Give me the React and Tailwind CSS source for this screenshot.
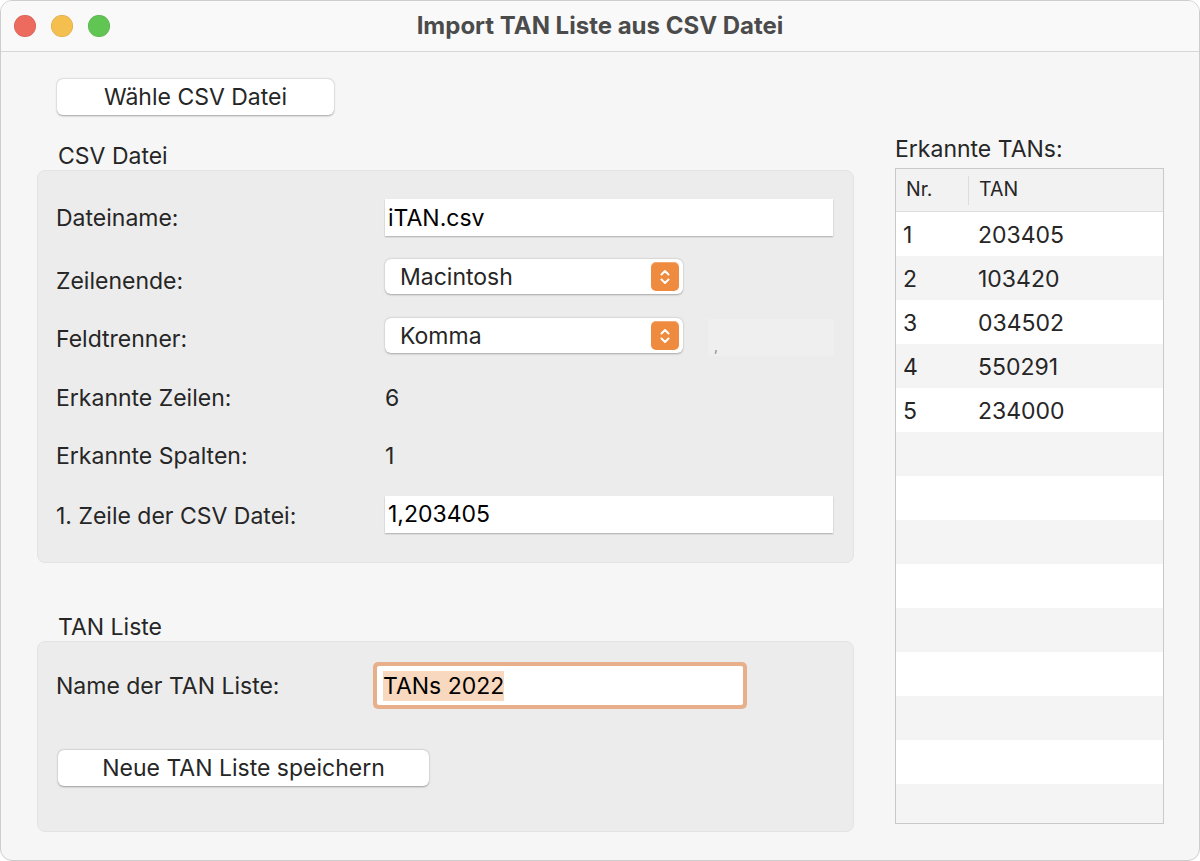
import React from "react";

const font = { fontFamily: "Inter, 'Noto Sans', sans-serif" };

function Stepper() {
  return (
    <div className="flex h-[29px] w-[28px] items-center justify-center rounded-[5px] bg-[#ee8b3f] shadow-[inset_0_1px_0_rgba(255,255,255,0.25)]">
      <svg width="14" height="20" viewBox="0 0 14 20" fill="none" stroke="white" strokeWidth="2" strokeLinecap="round" strokeLinejoin="round">
        <path d="M3.5 7.5 L7 4 L10.5 7.5" />
        <path d="M3.5 12.5 L7 16 L10.5 12.5" />
      </svg>
    </div>
  );
}

function Popup({ label }) {
  return (
    <div className="flex h-[35px] w-[298px] items-center justify-between rounded-[6px] bg-white pl-[15px] pr-[4px] shadow-[0_0.5px_2px_rgba(0,0,0,0.3)]">
      <span className="text-[23px] leading-[28px] text-[#262626]">{label}</span>
      <Stepper />
    </div>
  );
}

function TextField({ value, w = "w-[448px]" }) {
  return (
    <div className={`flex h-[37px] ${w} items-center bg-white pl-[3px] shadow-[0_1px_1.5px_rgba(0,0,0,0.28)]`}>
      <span className="text-[23px] leading-[28px] text-black">{value}</span>
    </div>
  );
}

function Button({ children, w }) {
  return (
    <div className={`flex h-[36px] ${w} items-center justify-center rounded-[6px] bg-white text-[23px] leading-[28px] text-[#262626] shadow-[0_0.5px_2px_rgba(0,0,0,0.35)]`}>
      {children}
    </div>
  );
}

const tans = [
  ["1", "203405"],
  ["2", "103420"],
  ["3", "034502"],
  ["4", "550291"],
  ["5", "234000"],
];

export default function App() {
  const rows = Array.from({ length: 15 }, (_, i) => i);
  return (
    <div className="h-[861px] w-[1200px] overflow-hidden bg-white" style={font}>
      <div className="flex h-[861px] w-[1200px] flex-col overflow-hidden rounded-[12px] border border-[#cdcdcd] bg-[#f6f6f6]">
        {/* Title bar */}
        <div className="relative flex h-[51px] shrink-0 items-center justify-center border-b border-[#d7d7d7] bg-[#f9f9f9]">
          <div className="absolute left-[13px] top-[14px] flex gap-[15px]">
            <div className="h-[22px] w-[22px] rounded-full bg-[#ec6a5e] shadow-[inset_0_0_0_0.5px_rgba(0,0,0,0.12)]" />
            <div className="h-[22px] w-[22px] rounded-full bg-[#f4bf4f] shadow-[inset_0_0_0_0.5px_rgba(0,0,0,0.12)]" />
            <div className="h-[22px] w-[22px] rounded-full bg-[#61c554] shadow-[inset_0_0_0_0.5px_rgba(0,0,0,0.12)]" />
          </div>
          <span className="text-[24px] font-bold leading-[30px] text-[#4b4b4b]">Import TAN Liste aus CSV Datei</span>
        </div>

        {/* Body */}
        <div className="flex flex-1 pl-[36px]">
          {/* Left column */}
          <div className="flex w-[817px] flex-col pt-[27px]">
            <div className="ml-[20px]">
              <Button w="w-[277px]">Wähle CSV Datei</Button>
            </div>
            <div className="ml-[21px] mt-[27px] h-[28px] text-[23px] leading-[28px] text-[#262626]">CSV Datei</div>
            <div className="mt-0 flex h-[393px] flex-col rounded-[8px] border border-[#e3e3e3] bg-[#ececec] pt-[28px] text-[23px] leading-[28px] text-[#262626]">
              <div className="flex h-[37px] items-center">
                <div className="w-[347px] pl-[18px]">Dateiname:</div>
                <TextField value="iTAN.csv" />
              </div>
              <div className="mt-[23px] flex h-[35px] items-start">
                <div className="w-[347px] pl-[18px] pt-[8px]">Zeilenende:</div>
                <Popup label="Macintosh" />
              </div>
              <div className="mt-[24px] flex h-[38px] items-start">
                <div className="w-[347px] pl-[18px] pt-[7px]">Feldtrenner:</div>
                <Popup label="Komma" />
                <div className="ml-[25px] mt-[1px] flex h-[37px] w-[126px] items-end bg-[#efefef] pb-[3px] pl-[6px] text-[14px] leading-none text-[#8a8a8a]">,</div>
              </div>
              <div className="mt-[18px] flex h-[48px] items-center">
                <div className="w-[347px] pl-[18px]">Erkannte Zeilen:</div>
                <div>6</div>
              </div>
              <div className="mt-[10px] flex h-[48px] items-center">
                <div className="w-[347px] pl-[18px]">Erkannte Spalten:</div>
                <div>1</div>
              </div>
              <div className="mt-[15px] flex h-[38px] items-center">
                <div className="w-[347px] pl-[18px] pt-[3px]">1. Zeile der CSV Datei:</div>
                <TextField value="1,203405" />
              </div>
            </div>

            <div className="ml-[21px] mt-[50px] h-[28px] text-[23px] leading-[28px] text-[#262626]">TAN Liste</div>
            <div className="mt-0 flex h-[191px] flex-col rounded-[8px] border border-[#e3e3e3] bg-[#ececec] pt-[20px] text-[23px] leading-[28px] text-[#262626]">
              <div className="flex h-[47px] items-center">
                <div className="w-[335px] pl-[18px]">Name der TAN Liste:</div>
                <div className="flex h-[47px] w-[374px] items-center rounded-[5px] bg-[#e8b08a] p-[4px]">
                  <div className="flex h-full w-full items-center rounded-[2px] bg-white pl-[6px]">
                    <span className="bg-[#f8d8bf] text-[23px] leading-[30px] text-black">TANs 2022</span>
                  </div>
                </div>
              </div>
              <div className="ml-[20px] mt-[41px]">
                <Button w="w-[371px]">Neue TAN Liste speichern</Button>
              </div>
            </div>
          </div>

          {/* Right column */}
          <div className="ml-[41px] flex flex-col pt-[83px]">
            <div className="h-[28px] text-[23px] leading-[28px] text-[#262626]">Erkannte TANs:</div>
            <div className="mt-[5px] flex h-[656px] w-[269px] flex-col overflow-hidden border border-[#c9c9c9] bg-white">
              <div className="flex h-[43px] shrink-0 items-center border-b border-[#dedede] bg-[#f2f2f2] text-[19.5px] text-[#262626]">
                <div className="w-[72px] pl-[10px]">Nr.</div>
                <div className="h-[29px] w-px bg-[#dcdcdc]" />
                <div className="pl-[10px]">TAN</div>
              </div>
              {rows.map((i) => (
                <div
                  key={i}
                  className={`flex h-[44px] shrink-0 items-center text-[23px] leading-[28px] text-[#262626] ${i % 2 === 0 ? "bg-white" : "bg-[#f4f4f5]"}`}
                >
                  {tans[i] ? (
                    <>
                      <div className="w-[82px] pl-[7px] pt-[2px]">{tans[i][0]}</div>
                      <div className="pt-[2px]">{tans[i][1]}</div>
                    </>
                  ) : null}
                </div>
              ))}
            </div>
          </div>
        </div>
      </div>
    </div>
  );
}
